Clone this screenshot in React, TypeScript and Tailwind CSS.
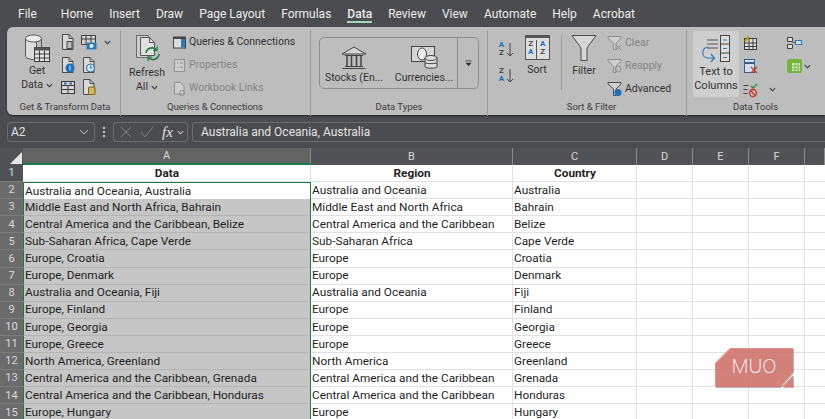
import type { ReactNode } from "react";

const tabs = ["File", "Home", "Insert", "Draw", "Page Layout", "Formulas", "Data", "Review", "View", "Automate", "Help", "Acrobat"];

const rows = [
  ["Australia and Oceania, Australia", "Australia and Oceania", "Australia"],
  ["Middle East and North Africa, Bahrain", "Middle East and North Africa", "Bahrain"],
  ["Central America and the Caribbean, Belize", "Central America and the Caribbean", "Belize"],
  ["Sub-Saharan Africa, Cape Verde", "Sub-Saharan Africa", "Cape Verde"],
  ["Europe, Croatia", "Europe", "Croatia"],
  ["Europe, Denmark", "Europe", "Denmark"],
  ["Australia and Oceania, Fiji", "Australia and Oceania", "Fiji"],
  ["Europe, Finland", "Europe", "Finland"],
  ["Europe, Georgia", "Europe", "Georgia"],
  ["Europe, Greece", "Europe", "Greece"],
  ["North America, Greenland", "North America", "Greenland"],
  ["Central America and the Caribbean, Grenada", "Central America and the Caribbean", "Grenada"],
  ["Central America and the Caribbean, Honduras", "Central America and the Caribbean", "Honduras"],
  ["Europe, Hungary", "Europe", "Hungary"],
];

function Chevron() {
  return (
    <svg viewBox="0 0 8 8" className="w-[7px] h-[7px] inline-block shrink-0" fill="none" stroke="currentColor" strokeWidth="1.2">
      <path d="M1 2.5 4 5.5 7 2.5" />
    </svg>
  );
}

function Ico({ w = 18, h = 18, children }: { w?: number; h?: number; children: ReactNode }) {
  return (
    <svg width={w} height={h} viewBox={`0 0 ${w} ${h}`} fill="none" className="shrink-0">
      {children}
    </svg>
  );
}

function Page({ children }: { children?: ReactNode }) {
  return (
    <Ico>
      <path d="M3.5 1.5h6.500l4 4v11h-10.500z" fill="#d8d8d8" stroke="#4a4a4a" />
      <path d="M10 1.5v4h4" stroke="#4a4a4a" />
      {children}
    </Ico>
  );
}

function Funnel({ big, children, dim }: { big?: boolean; children?: ReactNode; dim?: boolean }) {
  const c = dim ? "#8f8f8f" : "#4a4a4a";
  if (big) {
    return (
      <Ico w={26} h={28}>
        <path d="M1 1.5h24L16 14v12.500h-6V14z" fill="#d6d6d6" stroke={c} />
      </Ico>
    );
  }
  return (
    <Ico w={16} h={16}>
      <path d="M1 1.500h13v1.500L9 8v6.500H6.500V8L1 3z" fill="#cfcfcf" stroke={c} />
      {children}
    </Ico>
  );
}

function Separator() {
  return <div className="w-px self-stretch bg-[#9c9c9c] my-[-1px]" />;
}

function Group({ label, width, labelClass = "", children }: { label: string; width: string; labelClass?: string; children: ReactNode }) {
  return (
    <div className={`flex flex-col h-full shrink-0 ${width}`}>
      <div className="flex-1 min-h-0">{children}</div>
      <div className={`h-[14px] mb-[1px] text-center text-[9.5px] leading-[14px] text-[#3c3c3c] ${labelClass}`}>{label}</div>
    </div>
  );
}

function SmallItem({ icon, label, dim }: { icon: ReactNode; label: string; dim?: boolean }) {
  return (
    <div className={`flex items-center gap-[2px] h-[23px] text-[10.5px] ${dim ? "text-[#858585]" : "text-[#333333]"}`}>
      {icon}
      <span>{label}</span>
    </div>
  );
}

function SortLetters({ top, bottom }: { top: string; bottom: string }) {
  return (
    <div className="flex flex-col items-center text-[8px] leading-[8px] font-bold">
      <span className={top === "A" ? "text-[#1f6fb5]" : "text-[#444444]"}>{top}</span>
      <span className={bottom === "A" ? "text-[#1f6fb5]" : "text-[#444444]"}>{bottom}</span>
    </div>
  );
}

function Ribbon() {
  return (
    <div className="ml-[7px] h-[88px] flex rounded-l-[6px] bg-[#bdbdbd] shadow-[0_1px_2px_rgba(0,0,0,0.5)] pt-[4px] text-[#333333]">
      <Group label="Get & Transform Data" width="w-[113px] pl-[8px]" labelClass="pr-[5px]">
        <div className="flex">
          <div className="w-[44px] flex flex-col items-center pt-[2px] text-[10.5px] leading-[14px]">
            <Ico w={26} h={30}>
              <path d="M1.500 6v17c0 2 4 3.500 8 3.500h3V6z" fill="#dcdcdc" stroke="#555" />
              <ellipse cx="9.500" cy="5.500" rx="8" ry="3.500" fill="#ececec" stroke="#555" />
              <path d="M17.500 6v9" stroke="#555" />
              <rect x="10.500" y="14.500" width="15" height="14" fill="#e4e4e4" stroke="#3c3c3c" />
              <path d="M10.500 14.500h15v3h-15z" fill="#555" />
              <path d="M10.500 21h15M10.500 25h15M15.500 17.500v11M20.500 17.500v11" stroke="#3c3c3c" />
            </Ico>
            <span className="mt-[1px]">Get</span>
            <span className="flex items-center gap-[3px]">Data <Chevron /></span>
          </div>
          <div className="grid grid-cols-[21px_24px_8px] auto-rows-[22.5px] items-center">
            <Page><rect x="8" y="8.500" width="5" height="7" fill="#bcbcbc" stroke="#4a4a4a" /></Page>
            <Ico>
              <path d="M1.500 2.500h14v9h-14z" fill="#d4d4d4" stroke="#3c3c3c" />
              <path d="M1.500 6h14M6 2.500v9M11 2.500v9" stroke="#3c3c3c" />
              <rect x="6.500" y="9.500" width="10" height="7" rx="1" fill="#2d7ab8" />
              <circle cx="11.500" cy="13" r="2" fill="#e8f0f6" />
            </Ico>
            <Chevron />
            <Page><circle cx="11" cy="12" r="4.500" fill="#1f6fb5" /><path d="M11 9.500v5" stroke="#e8f0f6" /></Page>
            <Page><circle cx="10.500" cy="12" r="4" fill="#dce6ee" stroke="#1f6fb5" /><path d="M10.500 9.500V12h2" stroke="#1f6fb5" /></Page>
            <span />
            <Ico>
              <rect x="2.500" y="3.500" width="13" height="12" fill="#d4d4d4" stroke="#3c3c3c" />
              <path d="M2.500 7.500h13M2.500 11.500h13M9 7.500v8" stroke="#3c3c3c" />
              <path d="M5 4.500h2.500v2H5zM10.500 4.500H13v2h-2.500z" fill="#2d6fa8" />
            </Ico>
            <Page><rect x="8.500" y="9" width="6.500" height="7.500" rx="1" fill="#d8b45c" stroke="#7a5c12" /></Page>
            <span />
          </div>
        </div>
      </Group>
      <Separator />
      <Group label="Queries & Connections" width="w-[189px] pl-[8px]" labelClass="pr-[9px]">
        <div className="flex">
          <div className="w-[36px] flex flex-col items-center text-[10.5px] leading-[14px] mt-[3px]">
            <div className="pl-[3px]">
              <Ico w={28} h={28}>
                <path d="M1.500 1.500h12v22h-12z" fill="#cfcfcf" stroke="#6a6a6a" />
                <path d="M5.500 3.500h9l5 5v13h-14z" fill="#e0e0e0" stroke="#555" />
                <path d="M14.500 3.500v5h5" stroke="#555" />
                <path d="M11 19a6 6 0 0 1 10.500-3M24 20a6 6 0 0 1-10.500 3.500" stroke="#1d7d3c" strokeWidth="1.600" />
                <path d="M22 12.500V16.500h-4M13 27v-4h4" stroke="#1d7d3c" strokeWidth="1.200" />
              </Ico>
            </div>
            <span className="mt-[4px]">Refresh</span>
            <span className="flex items-center gap-[3px]">All <Chevron /></span>
          </div>
          <div className="ml-[7px] mt-[-0.5px] flex flex-col">
            <SmallItem
              label="Queries & Connections"
              icon={
                <Ico w={15} h={15}>
                  <rect x="1.500" y="2" width="12" height="11" fill="#dcdcdc" stroke="#444" />
                  <path d="M1.500 2h12v2h-12z" fill="#444" />
                  <path d="M9 4h4v8.500H9z" fill="#2d7ab8" />
                </Ico>
              }
            />
            <SmallItem
              dim
              label="Properties"
              icon={
                <Ico w={15} h={15}>
                  <rect x="2.500" y="1.500" width="10" height="12" fill="#cdcdcd" stroke="#929292" />
                  <path d="M5 5h1M8 5h3M5 9h1M8 9h3" stroke="#888" />
                </Ico>
              }
            />
            <SmallItem
              dim
              label="Workbook Links"
              icon={
                <Ico w={15} h={15}>
                  <path d="M2.500 1.500h6l3.500 3.500v8h-9.500z" fill="#cdcdcd" stroke="#929292" />
                  <circle cx="10" cy="12" r="2.500" stroke="#929292" />
                </Ico>
              }
            />
          </div>
        </div>
      </Group>
      <Separator />
      <Group label="Data Types" width="w-[176px] pl-[8px] pr-[8px]">
        <div className="mt-[6px] h-[52px] flex rounded-[5px] border border-[#8e8e8e] text-[10.5px] text-[#333333]">
          <div className="w-[137px] flex pl-[2px] pt-[7px]">
            <div className="w-[64px] flex flex-col items-center gap-[1px]">
              <Ico w={26} h={24}>
                <path d="M13 2 25 9H1z" fill="#d6d6d6" stroke="#444" />
                <path d="M4 10.500h18M4 21.500h18M1.500 23.500h23" stroke="#444" />
                <path d="M6 11v10M10.500 11v10M15.500 11v10M20 11v10" stroke="#444" strokeWidth="1.500" />
              </Ico>
              <span className="whitespace-nowrap">Stocks (En...</span>
            </div>
            <div className="w-[66px] ml-[5px] flex flex-col items-center gap-[1px]">
              <Ico w={28} h={24}>
                <rect x="1.500" y="1.500" width="23" height="15" fill="#d6d6d6" stroke="#444" />
                <ellipse cx="12" cy="9" rx="4.500" ry="6" fill="#ececec" stroke="#444" />
                <path d="M15 13v9c0 1.500 12 1.500 12 0v-9" fill="#dcdcdc" stroke="#444" />
                <ellipse cx="21" cy="13" rx="6" ry="2.500" fill="#dcdcdc" stroke="#444" />
                <path d="M15 17.500c0 1.500 12 1.500 12 0" stroke="#444" />
              </Ico>
              <span className="whitespace-nowrap">Currencies...</span>
            </div>
          </div>
          <div className="flex-1 border-l border-[#8e8e8e] flex items-center justify-center">
            <svg viewBox="0 0 8 8" className="w-[7px] h-[7px]" fill="#333333">
              <path d="M0.500 0.500h7v1h-7zM0.500 3h7L4 7z" />
            </svg>
          </div>
        </div>
      </Group>
      <Separator />
      <Group label="Sort & Filter" width="w-[198px] pl-[9px]">
        <div className="flex">
          <div className="w-[22px] flex flex-col gap-[8px] pt-[9px]">
            {[["A", "Z"], ["Z", "A"]].map(([a, b]) => (
              <div key={a} className="flex items-center h-[18px]">
                <div className="w-[9px]">
                  <SortLetters top={a} bottom={b} />
                </div>
                <Ico w={8} h={18}>
                  <path d="M4 3v13M1 13l3 3 3-3" stroke="#444" />
                </Ico>
              </div>
            ))}
          </div>
          <div className="ml-[5px] w-[26px] flex flex-col items-center pt-[4px] text-[10.5px] gap-[2px]">
            <div className="w-[25px] h-[25px] border border-[#555555] border-t-[3px] bg-[#dedede] grid grid-cols-2 text-center pt-[2px]">
              <div className="border-r border-[#555555]">
                <SortLetters top="Z" bottom="A" />
              </div>
              <SortLetters top="A" bottom="Z" />
            </div>
            <span>Sort</span>
          </div>
          <div className="w-px h-[55px] bg-[#9c9c9c] ml-[11px] mt-[4px]" />
          <div className="ml-[9px] w-[26px] flex flex-col items-center pt-[3px] text-[10.5px]">
            <Funnel big />
            <span className="mt-[1px]">Filter</span>
          </div>
          <div className="ml-[10px] flex flex-col">
            <SmallItem dim label="Clear" icon={<Funnel dim><path d="M9 10l5 5M14 10l-5 5" stroke="#8f8f8f" /></Funnel>} />
            <SmallItem dim label="Reapply" icon={<Funnel dim><circle cx="11" cy="11" r="3" stroke="#8f8f8f" /></Funnel>} />
            <SmallItem label="Advanced" icon={<Funnel><circle cx="11" cy="11.500" r="3.500" fill="#1f6fb5" /></Funnel>} />
          </div>
        </div>
      </Group>
      <Separator />
      <Group label="Data Tools" width="flex-1 pl-[6px]" labelClass="pr-[7px]">
        <div className="flex">
          <div className="w-[46px] h-[66px] rounded-[3px] bg-[#cfcfcf] flex flex-col items-center pt-[3px] text-[11px] leading-[14px]">
            <Ico w={30} h={29}>
              <path d="M6 6h11M6 10h11M6 14h11" stroke="#555" />
              <rect x="19.500" y="1.500" width="9" height="26" fill="#dedede" stroke="#444" />
              <path d="M19.500 10h9M19.500 19h9" stroke="#444" />
              <path d="M22 6h4M22 14.500h4M22 23.500h4" stroke="#2d7ab8" />
              <path d="M7 13c-7 1-7 11 0 11h6M10 20l3.500 4-3.500 4" stroke="#2d7ab8" strokeWidth="1.200" />
            </Ico>
            <span className="mt-[2px] whitespace-nowrap">Text to</span>
            <span>Columns</span>
          </div>
          <div className="ml-[3px] grid grid-cols-[18px_26px_18px_12px] auto-rows-[23.5px] items-center">
            <Ico w={16} h={16}>
              <rect x="2.500" y="3.500" width="12" height="11" fill="#dedede" stroke="#3c3c3c" />
              <path d="M2.500 8h12M2.500 11.500h12M7 3.500v11M11 3.500v11" stroke="#3c3c3c" />
              <path d="M2 6l4-5 2 1-4 5z" fill="#c69214" />
            </Ico>
            <span />
            <Ico w={16} h={16}>
              <path d="M1.500 2.500h5v4h-5zM1.500 9.500h5v4h-5z" fill="#dedede" stroke="#444" />
              <path d="M6.500 7.500h3" stroke="#444" />
              <rect x="9.500" y="5.500" width="6" height="4" fill="#cfe0ee" stroke="#2d7ab8" />
            </Ico>
            <span />
            <Ico w={16} h={16}>
              <rect x="2.500" y="1.500" width="10" height="13" fill="#cfe0ee" stroke="#3a5f86" />
              <path d="M2.500 5h10" stroke="#3a5f86" strokeWidth="2" />
              <path d="M9 9l6 6M15 9l-6 6" stroke="#c0392b" strokeWidth="1.400" />
            </Ico>
            <span />
            <Ico w={18} h={18}>
              <rect x="1" y="2" width="15" height="14" rx="2" fill="#74b53f" />
              <path d="M6 6h8v8H6z" fill="#d8eac8" />
              <path d="M9 6v8M12 6v8M6 9h8M6 12h8" stroke="#74b53f" />
            </Ico>
            <span className="text-[#333333] flex"><Chevron /></span>
            <Ico w={16} h={16}>
              <path d="M1.500 3.500h5M1.500 7.500h4" stroke="#444" />
              <path d="M9 4l2 2 4-4" stroke="#2e8b3d" strokeWidth="1.300" />
              <path d="M1.500 11.500h4" stroke="#444" />
              <circle cx="11" cy="11" r="3.500" stroke="#c0392b" strokeWidth="1.300" />
              <path d="M8.500 8.500l5 5" stroke="#c0392b" strokeWidth="1.300" />
            </Ico>
            <span className="text-[#333333] flex pl-[9px]"><Chevron /></span>
            <span />
            <span />
          </div>
        </div>
      </Group>
    </div>
  );
}

function FormulaBar() {
  return (
    <div className="h-[33px] flex items-center px-[7px] text-[#e4e4e4] text-[12px]">
      <div className="w-[88px] h-[20px] rounded-[3px] border border-[#6b6c6f] flex items-center justify-between pl-[3px] pr-[5px] mt-[1px]">
        <span>A2</span>
        <span className="text-[#c4c4c4] flex">
          <svg viewBox="0 0 10 10" className="w-[10px] h-[10px]" fill="none" stroke="currentColor"><path d="M1 3 5 7 9 3" /></svg>
        </span>
      </div>
      <div className="w-[18px] flex flex-col items-center gap-[2px]">
        <i className="w-[2px] h-[2px] bg-[#c4c4c4]" />
        <i className="w-[2px] h-[2px] bg-[#c4c4c4]" />
        <i className="w-[2px] h-[2px] bg-[#c4c4c4]" />
      </div>
      <div className="w-[75px] h-[20px] rounded-[3px] border border-[#6b6c6f] flex items-center pl-[6px] mt-[1px]">
        <svg viewBox="0 0 12 12" className="w-[12px] h-[12px]" fill="none" stroke="#808184"><path d="M1 1l10 10M11 1 1 11" /></svg>
        <svg viewBox="0 0 14 12" className="w-[14px] h-[12px] ml-[8px]" fill="none" stroke="#808184"><path d="M1 6l4 5 8-10" /></svg>
        <span className="ml-[8px] font-['Liberation_Serif',serif] italic text-[15px] leading-none">fx</span>
        <span className="ml-[4px] text-[#c4c4c4] flex"><Chevron /></span>
      </div>
      <div className="flex-1 ml-[4px] mr-[-7px] h-[20px] rounded-l-[3px] border border-r-0 border-[#6b6c6f] flex items-center pl-[8px] mt-[1px]">
        Australia and Oceania, Australia
      </div>
    </div>
  );
}

const colHeaders = [
  ["A", "w-[288px]", true],
  ["B", "w-[202px]", false],
  ["C", "w-[124px]", false],
  ["D", "w-[56px]", false],
  ["E", "w-[56px]", false],
  ["F", "w-[56px]", false],
  ["G", "flex-1", false],
] as const;

function Sheet() {
  return (
    <div className="text-[11.8px] text-[#1f1f1f] bg-white">
      <div className="flex h-[17px] bg-[#515255] text-[11px] text-[#d8d8d8]">
        <div className="w-[23px] shrink-0 flex items-end justify-end pr-[1px] pb-[1px]">
          <div className="w-0 h-0 border-l-[12px] border-l-transparent border-b-[12px] border-b-[#e6e6e6]" />
        </div>
        {colHeaders.map(([c, w, sel]) => (
          <div
            key={c}
            className={`${w} shrink-0 flex items-center justify-center border-r border-[#8a8a8a] pt-[2px] ${sel ? "bg-[#636363] border-b-2 border-b-[#1b7a47]" : ""}`}
          >
            {c === "G" ? "" : c}
          </div>
        ))}
      </div>
      <Row n={1} a="Data" b="Region" c="Country" header />
      {rows.map((r, i) => (
        <Row key={i} n={i + 2} a={r[0]} b={r[1]} c={r[2]} active={i === 0} />
      ))}
    </div>
  );
}

function Row({ n, a, b, c, header, active }: { n: number; a: string; b: string; c: string; header?: boolean; active?: boolean }) {
  return (
    <div className="flex h-[17.1px]">
      <div className={`w-[23px] shrink-0 flex items-center justify-center pt-[1px] text-[11px] text-[#d8d8d8] border-b border-[#7c7c7c] ${header ? "bg-[#515255]" : "bg-[#6b6b6b]"}`}>
        {n}
      </div>
      <div
        className={`w-[288px] shrink-0 flex items-center pl-[1px] pt-[1px] whitespace-nowrap overflow-hidden ${
          header
            ? "justify-center font-bold border-r border-b border-[#e1e1e1]"
            : active
              ? "bg-white border-x border-t border-[#1b7a47]"
              : "bg-[#c6c6c6] border-x border-x-[#1b7a47] border-b border-b-[#b4b4b4]"
        }`}
      >
        {a}
      </div>
      <div className={`w-[202px] shrink-0 flex items-center pl-[1px] pt-[1px] border-r border-b border-[#e1e1e1] whitespace-nowrap overflow-hidden ${header ? "justify-center font-bold" : ""}`}>{b}</div>
      <div className={`w-[124px] shrink-0 flex items-center pl-[1px] pt-[1px] border-r border-b border-[#e1e1e1] whitespace-nowrap ${header ? "justify-center font-bold" : ""}`}>{c}</div>
      <div className="w-[56px] shrink-0 border-r border-b border-[#e1e1e1]" />
      <div className="w-[56px] shrink-0 border-r border-b border-[#e1e1e1]" />
      <div className="w-[56px] shrink-0 border-r border-b border-[#e1e1e1]" />
      <div className="flex-1 border-b border-[#e1e1e1]" />
    </div>
  );
}

function Watermark() {
  return (
    <div className="absolute left-[715px] top-[348px] w-[78px] h-[39px] drop-shadow-[1px_1px_0_rgba(0,0,0,0.35)]">
      <div className="w-full h-full bg-[#d9736a]/80 [clip-path:polygon(15px_0,100%_0,100%_24px,65px_100%,0_100%,0_15px)] flex items-center justify-center font-['Inter',sans-serif] font-extralight text-white text-[19px] leading-none pb-[2px]">
        MUO
      </div>
      <div className="absolute right-0 bottom-0 w-[11px] h-[12px] bg-[#d9736a]/80 [clip-path:polygon(100%_0,100%_100%,0_100%)]" />
    </div>
  );
}

export default function App() {
  return (
    <div className="relative w-[825px] h-[419px] overflow-hidden bg-[#4b4c4f] font-['Roboto',sans-serif]">
      <div className="h-[27px] flex items-center pl-[18px] text-[12px] text-[#ececec]">
        {tabs.map((t, i) => (
          <div key={t} className={`relative ${i === 0 ? "mr-[24px]" : "mr-[16px]"} ${t === "Data" ? "font-medium" : ""}`}>
            {t}
            {t === "Data" && <div className="absolute left-0 right-0 top-[16px] h-[2px] bg-[#9fd8b8]" />}
          </div>
        ))}
      </div>
      <Ribbon />
      <FormulaBar />
      <Sheet />
      <Watermark />
    </div>
  );
}
